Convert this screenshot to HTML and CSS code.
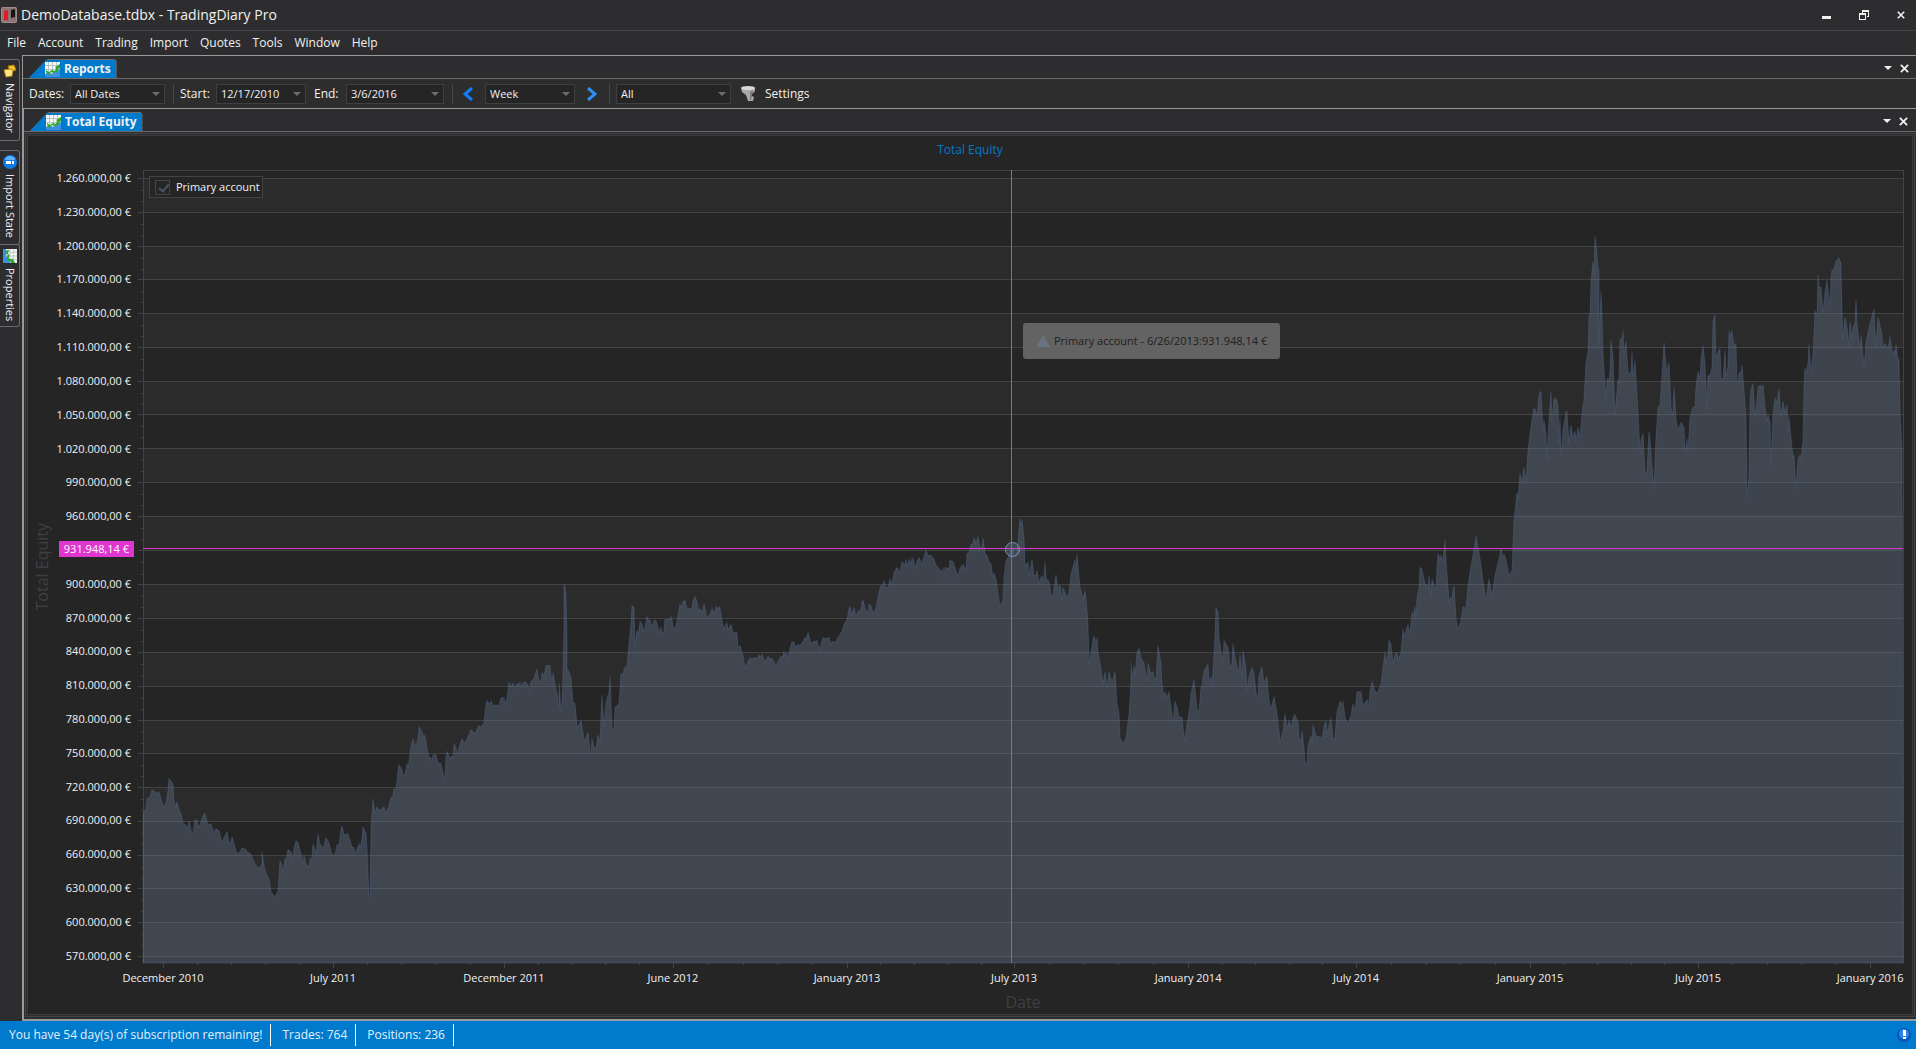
FILE: index.html
```html
<!DOCTYPE html>
<html lang="en">
<head>
    <meta charset="UTF-8">
    <meta name="viewport" content="width=device-width, initial-scale=1.0">
    <title>DemoDatabase.tdbx - TradingDiary Pro</title>
    <link rel="stylesheet" href="styles.css">
</head>
<body>
    <!-- shared icons -->
    <svg class="sprite" aria-hidden="true">
        <symbol id="icon-chart" viewBox="0 0 15 15">
            <path fill="#f4f7f4" d="M0 0h15v15H0z"/>
            <path stroke="#b9c4c9" d="M3.5 0v15M7.5 0v15M11.5 0v15M0 3.5h15M0 7.5h15"/>
            <path fill="#3d8fe0" d="M0 12l4-2 3 2 4-3 4-2v8H0z"/>
            <path fill="#2fa92c" d="M1 8l3 2 3-2 3 1 1-3-1-1 5-3v5l-1-1-2 4-3 1-3-1-3 3-2-3z"/>
        </symbol>
        <symbol id="icon-close" viewBox="0 0 10 10">
            <path stroke="#f1f1f1" stroke-width="2" d="M1 1l8 8M9 1L1 9"/>
        </symbol>
        <symbol id="icon-down" viewBox="0 0 8 4">
            <path fill="#f1f1f1" d="M0 0h8L4 4z"/>
        </symbol>
    </svg>

    <header class="titlebar">
        <svg class="app-icon" viewBox="0 0 16 16">
            <rect width="16" height="16" rx="2" fill="#a08a8a"/>
            <rect x="1" y="1" width="14" height="14" fill="#8c7474"/>
            <path fill="#e01b24" d="M3 4l4-1v10H3z"/>
            <path fill="#151515" d="M10 3l4-1v8l-4 1z"/>
        </svg>
        <h1>DemoDatabase.tdbx - TradingDiary Pro</h1>
        <div class="window-buttons">
            <button type="button" aria-label="Minimize"><svg width="9" height="10" viewBox="0 0 9 10"><path fill="#f1f1f1" d="M0 6h9v3H0z"/></svg></button>
            <button type="button" aria-label="Restore"><svg width="10" height="10" viewBox="0 0 10 10"><path fill="#f1f1f1" d="M3 0h7v7H8V6h1V2H4v1H3zM0 3h7v7H0zM1 5v4h5V5z" fill-rule="evenodd"/></svg></button>
            <button type="button" aria-label="Close"><svg width="8" height="8"><use href="#icon-close"/></svg></button>
        </div>
    </header>

    <nav class="menubar">
        <a href="#">File</a>
        <a href="#">Account</a>
        <a href="#">Trading</a>
        <a href="#">Import</a>
        <a href="#">Quotes</a>
        <a href="#">Tools</a>
        <a href="#">Window</a>
        <a href="#">Help</a>
    </nav>

    <div class="workspace">
        <aside class="sidebar">
            <button type="button" class="side-tab navigator">
                <svg viewBox="0 0 14 14"><path fill="#f2c42e" stroke="#a87708" d="M5 2l6-1 2 5-6 2z"/><path fill="#ffe684" stroke="#b98a12" d="M1 6l6-1 3 1-1 6-6 1z"/></svg>
                <span>Navigator</span>
            </button>
            <button type="button" class="side-tab">
                <svg viewBox="0 0 14 14"><circle cx="7" cy="7" r="7" fill="#0f7ae8"/><path fill="#62b1ff" d="M2 5a5 4 0 0 1 10 0z"/><path fill="#fff" d="M3 6h5v3H3zM9 6h2v3H9z"/></svg>
                <span>Import State</span>
            </button>
            <button type="button" class="side-tab">
                <svg class="turned" viewBox="0 0 15 15"><use href="#icon-chart"/></svg>
                <span>Properties</span>
            </button>
        </aside>

        <main class="dock">
            <div class="tabstrip">
                <div class="tab"><div class="tab-face"><svg><use href="#icon-chart"/></svg>Reports</div></div>
                <div class="pane-buttons">
                    <button type="button" aria-label="Pane menu"><svg width="8" height="4"><use href="#icon-down"/></svg></button>
                    <button type="button" aria-label="Close pane"><svg width="9" height="9"><use href="#icon-close"/></svg></button>
                </div>
            </div>

            <form class="toolbar">
                <label for="dates">Dates:</label>
                <span class="combo dates"><select id="dates"><option>All Dates</option></select></span>
                <i class="separator"></i>
                <label for="start">Start:</label>
                <span class="combo start"><select id="start"><option>12/17/2010</option></select></span>
                <label for="end">End:</label>
                <span class="combo end"><select id="end"><option>3/6/2016</option></select></span>
                <i class="separator"></i>
                <button type="button" class="step" aria-label="Previous"><svg width="10" height="14" viewBox="0 0 10 14"><path fill="none" stroke="#0d7ef5" stroke-width="3" d="M9 1L2 7l7 6"/></svg></button>
                <span class="combo period"><select id="period" aria-label="Period"><option>Week</option></select></span>
                <button type="button" class="step" aria-label="Next"><svg width="10" height="14" viewBox="0 0 10 14"><path fill="none" stroke="#2b90fb" stroke-width="3" d="M1 1l7 6-7 6"/></svg></button>
                <i class="separator"></i>
                <span class="combo filter"><select id="filter" aria-label="Filter"><option>All</option></select></span>
                <button type="button" class="settings">
                    <svg width="15" height="15" viewBox="0 0 15 15"><path fill="#a9a9a9" d="M0 2h14v3l-3 3v2l2 1-1 4H7L5 9 1 6z"/><ellipse cx="7" cy="2" rx="7" ry="2" fill="#d8d8d8"/><path fill="#7a7a7a" d="M9 6l3-2-2 10H9z"/></svg>
                    Settings
                </button>
            </form>

            <section class="document">
                <div class="tabstrip">
                    <div class="tab"><div class="tab-face"><svg><use href="#icon-chart"/></svg>Total Equity</div></div>
                    <div class="pane-buttons">
                        <button type="button" aria-label="Pane menu"><svg width="8" height="4"><use href="#icon-down"/></svg></button>
                        <button type="button" aria-label="Close pane"><svg width="9" height="9"><use href="#icon-close"/></svg></button>
                    </div>
                </div>

                <div class="chart">
                    <h2>Total Equity</h2>
                    <div class="y-title"><span>Total Equity</span></div>
                    <div class="y-axis" id="yAxis"></div>
                    <div class="plot">
                        <svg class="plot-area" viewBox="143 170 1760 792" preserveAspectRatio="none">
                            <g id="grid"></g>
                            <path id="series" class="series"/>
                            <path id="ticks" class="ticks"/>
                            <path class="crosshair" d="M1011.5 170V962M143 548.5H1903"/>
                        </svg>
                        <label class="legend"><input type="checkbox" checked>Primary account</label>
                        <i class="marker"></i>
                        <div class="tooltip"><i></i>Primary account - 6/26/2013:931.948,14 €</div>
                        <div class="value-tag">931.948,14 €</div>
                    </div>
                    <div class="x-axis" id="xAxis"></div>
                    <div class="x-title">Date</div>
                </div>
            </section>
        </main>
    </div>

    <footer class="statusbar">
        <span>You have 54 day(s) of subscription remaining!</span>
        <span>Trades: 764</span>
        <span>Positions: 236</span>
        <svg class="alert" viewBox="0 0 14 14"><circle cx="7" cy="7" r="7" fill="#0b55b8"/><circle cx="7" cy="6" r="5" fill="#2d86e6"/><path fill="#fff" d="M6 2h3v6H6zM6 9h3v2H6z"/></svg>
    </footer>

    <script src="chart.js"></script>
</body>
</html>
```
FILE: styles.css
```css
* {
    box-sizing: border-box;
}
body {
    margin: 0;
    height: 100vh;
    display: flex;
    flex-direction: column;
    overflow: hidden;
    background: #2d2d30;
    color: #f1f1f1;
    font-family: "Open Sans", "Noto Sans", sans-serif;
    font-size: 12px;
    line-height: 16px;
}
button {
    border: none;
    padding: 0;
    background: none;
    color: inherit;
    font: inherit;
}
svg {
    display: block;
}
.sprite {
    position: absolute;
    width: 0;
    height: 0;
}

/* title and menu */
.titlebar {
    display: flex;
    align-items: center;
    height: 31px;
    flex: none;
    padding: 0 11px 0 1px;
    border-bottom: 1px solid #434346;
}
.app-icon {
    width: 16px;
    height: 16px;
}
.titlebar h1 {
    margin: 0 0 0 4px;
    flex: 1;
    font-size: 14px;
    font-weight: normal;
    line-height: 20px;
}
.window-buttons {
    display: flex;
    align-items: center;
    gap: 28px;
}
.menubar {
    display: flex;
    align-items: center;
    gap: 12px;
    height: 24px;
    flex: none;
    padding-left: 7px;
}
.menubar a {
    color: inherit;
    text-decoration: none;
}

/* left strip */
.workspace {
    display: flex;
    flex: 1;
    min-height: 0;
}
.sidebar {
    width: 22px;
    flex: none;
    padding-top: 4px;
    font-size: 11px;
}
.side-tab {
    display: flex;
    flex-direction: column;
    align-items: center;
    gap: 5px;
    width: 20px;
    height: 83px;
    padding-top: 4px;
    border: 1px solid #6b6b6e;
    border-left: none;
    border-radius: 0 3px 3px 0;
}
.side-tab.navigator {
    height: 82px;
    margin-bottom: 9px;
}
.side-tab.navigator + .side-tab {
    height: 95px;
    margin-bottom: -1px;
}
.side-tab svg {
    width: 14px;
    height: 14px;
    flex: none;
}
.side-tab .turned {
    transform: rotate(90deg);
}
.side-tab span {
    writing-mode: vertical-rl;
    white-space: nowrap;
}

/* docked panes */
.dock {
    display: flex;
    flex-direction: column;
    flex: 1;
    min-width: 0;
    border-top: 1px solid #999;
    border-left: 1px solid #999;
}
.tabstrip {
    display: flex;
    align-items: flex-end;
    justify-content: space-between;
    height: 23px;
    flex: none;
    padding: 0 7px 0 6px;
    border-bottom: 1px solid #6b6b6b;
}
.document .tabstrip {
    padding-right: 8px;
}
.tab {
    padding: 1px 1px 0 0;
    background: #6b6b6b;
    clip-path: polygon(0 100%, 17px 1px, 19px 0, calc(100% - 2px) 0, 100% 2px, 100% 100%);
}
.tab-face {
    display: flex;
    align-items: center;
    gap: 4px;
    height: 18px;
    padding: 0 5px 0 16px;
    background: #007acc;
    font-weight: bold;
}
.tab-face svg {
    width: 15px;
    height: 15px;
}
.pane-buttons {
    display: flex;
    align-items: center;
    gap: 8px;
    height: 20px;
}
.toolbar {
    display: flex;
    align-items: center;
    height: 29px;
    flex: none;
    padding-left: 6px;
    background: #2d2d2d;
}
.combo {
    position: relative;
    flex: none;
    height: 20px;
    margin-right: 8px;
}
.combo::after {
    content: "";
    position: absolute;
    right: 5px;
    top: 8px;
    border: 4px solid transparent;
    border-top-color: #6d6d6d;
    border-bottom: none;
    pointer-events: none;
}
.combo select {
    width: 100%;
    height: 20px;
    padding: 0 4px;
    appearance: none;
    border: 1px solid #3f3f42;
    border-radius: 0;
    background: #252526;
    color: inherit;
    font: inherit;
    font-size: 11px;
    line-height: 18px;
}
.toolbar label {
    width: 36px;
    flex: none;
    white-space: nowrap;
}
.toolbar label[for="dates"] {
    width: 41px;
}
.toolbar label[for="end"] {
    width: 32px;
}
.dates {
    width: 95px;
}
.start,
.period {
    width: 90px;
}
.end {
    width: 98px;
}
.filter {
    width: 115px;
}
.separator {
    width: 1px;
    height: 20px;
    margin-right: 6px;
    background: #46464a;
}
.step {
    margin: 0 12px 0 4px;
}
.combo + .step {
    margin-right: 12px;
}
.settings {
    display: flex;
    align-items: center;
    gap: 9px;
    margin-left: 2px;
}
.document {
    display: flex;
    flex-direction: column;
    flex: 1;
    min-height: 0;
    border: solid #999;
    border-width: 1px 0 2px 1px;
}

/* chart */
.chart {
    display: grid;
    grid-template: 36px 1fr 29px 24px / 26px 91px 1fr;
    flex: 1;
    min-height: 0;
    margin: 1px 1px 2px;
    padding: 0 11px 0 0;
    border: 1px solid #434346;
    background: #252526;
    box-shadow: inset 0 0 0 1px #2d2d30, inset 0 0 0 2px #3a3a3d;
}
.chart h2 {
    grid-column: 1 / -1;
    margin: 0;
    padding: 8px 0 0 11px;
    color: #007acc;
    font-size: 12px;
    font-weight: normal;
    text-align: center;
}
.y-title,
.x-title {
    color: #3f3f42;
    font-size: 16px;
    line-height: 20px;
}
.y-title {
    display: flex;
    align-items: center;
    justify-content: flex-end;
}
.y-title span {
    writing-mode: vertical-rl;
    transform: rotate(180deg);
}
.y-axis {
    display: flex;
    flex-direction: column;
    justify-content: space-between;
    padding: 1px 12px 0 0;
    text-align: right;
    font-size: 11px;
    line-height: 14px;
    white-space: nowrap;
}
.plot {
    position: relative;
    min-width: 0;
    min-height: 0;
}
.plot-area {
    position: absolute;
    width: 100%;
    height: 100%;
    overflow: visible;
}
.band {
    fill: #2b2b2b;
}
.line,
.ticks {
    fill: none;
    stroke: #434343;
    shape-rendering: crispEdges;
}
.series {
    fill: rgba(99, 114, 139, 0.4);
    stroke: rgba(90, 122, 165, 0.3);
}
.crosshair {
    fill: none;
    stroke: #e036d0;
    shape-rendering: crispEdges;
}
.legend {
    position: absolute;
    left: 6px;
    top: 6px;
    display: flex;
    align-items: center;
    gap: 6px;
    height: 22px;
    padding: 0 2px 0 5px;
    border: 1px solid #434343;
    background: #252526;
    font-size: 11px;
}
.legend input {
    width: 15px;
    height: 15px;
    margin: 0;
    appearance: none;
    border: 1px solid #3c4654;
}
.legend input:checked::after {
    content: "";
    display: block;
    width: 4px;
    height: 8px;
    margin: 1px 0 0 5px;
    border: solid #4a5566;
    border-width: 0 2px 2px 0;
    transform: rotate(40deg);
}
.marker {
    position: absolute;
    left: 49.35%;
    top: 47.8%;
    width: 15px;
    height: 15px;
    margin: -7px 0 0 -7px;
    border: 1px solid #7b93b8;
    border-radius: 50%;
    background: rgba(110, 135, 170, 0.3);
}
.tooltip {
    position: absolute;
    left: 50%;
    top: 19.3%;
    display: flex;
    align-items: center;
    gap: 4px;
    height: 36px;
    padding: 0 13px;
    border-radius: 3px;
    background: #636363;
    color: #202020;
    font-size: 11px;
    white-space: nowrap;
}
.tooltip i {
    border: 7px solid transparent;
    border-top: none;
    border-bottom: 12px solid #69727f;
}
.value-tag {
    position: absolute;
    right: calc(100% + 9px);
    top: 47.8%;
    height: 16px;
    margin-top: -8px;
    padding: 0 5px;
    background: #e036d0;
    color: #fff;
    font-size: 11px;
    white-space: nowrap;
}
.x-axis {
    position: relative;
    grid-column: 3;
    font-size: 11px;
}
.x-axis span {
    position: absolute;
    top: 7px;
    transform: translateX(-50%);
    white-space: nowrap;
}
.x-title {
    grid-column: 3;
    text-align: center;
}

/* status */
.statusbar {
    display: flex;
    align-items: center;
    height: 28px;
    flex: none;
    padding: 0 5px 0 0;
    background: #007acc;
    color: #e4f1fa;
}
.statusbar span {
    height: 22px;
    padding: 0 8px 0 11px;
    border-right: 1px solid #fff;
    line-height: 22px;
}
.statusbar span:first-child {
    padding-left: 9px;
}
.alert {
    width: 14px;
    height: 14px;
    margin-left: auto;
}
```
FILE: chart.js
```js
// plot rectangle, same units as the viewBox
const LEFT = 143, TOP = 170, RIGHT = 1903, BOTTOM = 962;
const FIRST_LINE = 178, LAST_LINE = 955;
const MAX_VALUE = 1260, MIN_VALUE = 570, STEP = 30;

const months = [
    ['December 2010', 163], ['July 2011', 333], ['December 2011', 504],
    ['June 2012', 673], ['January 2013', 847], ['July 2013', 1014],
    ['January 2014', 1188], ['July 2014', 1356], ['January 2015', 1530],
    ['July 2015', 1698], ['January 2016', 1870]
];

const equity = `143,812 146,808 147,798 150,796 152,789 155,791 157,793 159,791 162,802 164,806 166,802 168,790 169,778 173,783 174,800 176,806 177,801 179,809 181,813 183,822 188,827 189,820 192,833 193,832 195,819 197,819 199,827 202,818 204,813 205,813 208,824 211,823 214,832 216,828 219,830 222,842 224,837 227,831 229,842 231,842 232,836 237,853 240,851 242,847 245,848 248,852 250,852 255,863 257,866 260,867 262,862 262,851 264,865 267,875 269,877 271,891 275,896 278,890 280,860 282,865 283,873 285,857 286,861 288,849 291,851 293,860 294,847 296,840 298,842 301,853 303,863 304,854 306,863 309,866 310,858 312,857 313,843 316,853 318,833 320,843 323,848 326,837 329,842 332,854 335,854 337,844 339,844 341,829 342,825 344,834 348,833 352,846 354,847 355,854 357,848 359,843 360,848 361,842 362,839 363,826 366,833 367,847 368,873 369,897 370,893 371,827 372,813 373,798 375,812 377,806 380,810 384,806 386,812 388,808 391,797 393,795 394,788 396,789 398,770 399,764 402,769 403,775 405,773 407,763 408,766 409,761 411,745 413,738 415,747 416,742 417,745 419,726 422,731 424,737 425,734 427,748 429,756 431,757 432,761 433,754 436,754 438,762 441,763 444,777 445,775 446,757 447,751 450,758 452,755 453,759 454,743 456,747 457,755 459,747 462,738 465,743 468,736 471,729 475,733 479,725 481,727 484,722 486,703 487,700 490,704 491,700 493,705 496,704 499,705 501,697 504,697 506,704 507,697 509,682 512,686 513,682 515,690 516,684 520,682 522,686 523,682 525,681 528,684 529,692 531,681 534,678 537,668 539,680 541,681 542,672 544,675 546,665 550,665 552,684 553,672 556,689 557,692 559,708 559,682 561,711 562,703 563,670 564,627 564,583 566,593 567,635 567,672 568,669 571,677 573,702 575,703 576,713 577,728 581,720 584,738 585,741 588,731 590,750 591,753 592,738 594,747 596,747 598,734 600,742 601,713 602,694 604,726 606,701 609,692 610,676 612,727 614,728 615,707 619,703 621,673 623,675 624,668 627,665 629,643 631,623 632,605 634,607 635,644 637,630 638,635 640,621 642,623 643,630 645,627 647,616 649,621 650,618 651,627 654,620 656,620 658,627 660,633 661,626 662,633 664,631 665,619 670,619 671,616 672,618 673,628 676,626 679,609 680,604 681,607 683,601 685,600 687,608 692,608 693,600 695,596 697,601 699,612 700,608 702,613 704,603 707,617 710,614 712,608 714,613 716,606 718,609 719,606 720,608 722,620 724,628 727,622 728,629 731,624 733,632 737,632 738,647 740,645 743,655 745,667 749,659 749,663 750,657 752,659 754,657 757,658 759,654 760,657 762,654 765,661 768,656 771,659 772,658 776,665 778,661 781,656 783,656 784,650 784,655 786,652 788,657 790,648 792,641 794,642 796,647 798,644 800,645 803,641 805,637 806,639 808,632 811,643 814,641 817,640 820,650 821,643 823,637 825,638 829,637 831,644 832,641 835,642 838,637 842,631 844,624 847,619 849,608 850,606 852,614 854,607 856,616 858,611 861,609 862,601 863,600 866,611 868,611 869,604 871,605 873,613 876,608 878,596 881,584 882,588 884,580 886,588 888,586 890,579 892,583 894,572 897,567 900,572 902,561 905,565 906,559 907,567 909,559 911,564 912,557 914,561 915,568 917,561 919,557 922,564 924,556 926,550 928,555 931,555 934,559 936,565 939,568 941,572 943,568 944,577 945,567 949,568 950,560 953,561 955,567 957,573 958,576 960,568 963,564 966,569 967,553 969,552 971,544 973,543 974,537 976,543 978,536 980,547 982,547 983,537 985,553 987,555 989,561 991,563 993,578 994,573 996,578 998,593 1000,606 1003,600 1004,577 1006,560 1008,557 1011,549 1013,548 1014,556 1017,552 1019,530 1020,518 1021,526 1022,519 1024,537 1025,565 1028,562 1029,575 1032,559 1034,575 1036,575 1037,570 1039,582 1042,575 1044,580 1045,561 1046,578 1049,581 1051,595 1053,595 1055,580 1056,574 1058,590 1060,584 1062,600 1063,587 1067,597 1069,593 1071,574 1075,559 1076,571 1077,553 1080,587 1083,598 1085,590 1086,597 1088,623 1089,665 1091,652 1094,635 1096,643 1097,637 1098,652 1101,668 1103,683 1105,671 1107,687 1109,671 1111,679 1113,679 1115,671 1117,703 1119,713 1120,737 1123,743 1126,738 1129,713 1131,682 1131,662 1132,678 1134,665 1135,675 1137,652 1139,648 1141,658 1144,662 1147,681 1148,663 1151,673 1153,671 1154,677 1156,679 1158,645 1161,663 1162,683 1164,697 1165,691 1167,697 1169,691 1171,707 1173,722 1175,701 1177,706 1179,717 1182,716 1183,727 1185,741 1187,723 1189,712 1191,693 1194,679 1197,708 1199,711 1201,687 1202,685 1204,670 1208,664 1209,682 1211,676 1212,687 1214,653 1215,637 1216,607 1218,612 1219,637 1222,657 1223,659 1224,640 1228,647 1230,667 1232,663 1233,643 1235,657 1239,673 1240,654 1242,677 1243,650 1246,668 1247,690 1249,676 1252,667 1254,673 1256,692 1258,699 1259,675 1262,666 1264,683 1267,675 1269,700 1271,708 1274,696 1277,713 1279,730 1280,742 1283,730 1285,713 1287,728 1289,720 1292,727 1293,717 1295,714 1298,722 1299,737 1301,740 1302,730 1304,747 1305,763 1307,762 1308,745 1311,735 1312,742 1313,724 1316,735 1322,737 1324,726 1326,720 1327,733 1330,720 1331,718 1333,738 1335,737 1337,711 1340,701 1343,704 1343,700 1345,717 1348,723 1351,715 1353,703 1355,711 1357,691 1361,691 1363,705 1367,699 1369,705 1370,690 1372,681 1375,690 1377,693 1381,683 1383,667 1385,651 1386,663 1388,652 1389,639 1391,644 1393,663 1395,654 1397,652 1398,659 1401,652 1403,628 1404,636 1408,624 1410,633 1412,612 1414,614 1415,605 1416,619 1417,597 1419,587 1420,567 1422,569 1425,583 1427,585 1428,589 1429,575 1431,595 1432,579 1436,590 1437,567 1438,553 1440,559 1441,555 1443,560 1445,539 1446,560 1449,600 1452,596 1454,585 1456,618 1458,629 1461,620 1463,606 1466,608 1468,585 1472,560 1475,543 1476,535 1477,541 1480,558 1483,580 1486,600 1489,578 1492,596 1495,575 1500,554 1501,547 1503,558 1504,554 1506,559 1509,575 1512,570 1514,520 1517,492 1518,499 1520,473 1522,482 1524,467 1526,482 1528,450 1531,426 1534,408 1535,409 1537,416 1539,394 1541,391 1543,431 1544,420 1546,433 1547,459 1549,420 1551,391 1552,421 1554,397 1555,403 1556,398 1558,404 1559,443 1560,417 1561,457 1563,430 1566,412 1567,411 1569,443 1571,425 1573,438 1575,431 1576,441 1578,427 1580,437 1582,413 1584,400 1586,362 1588,352 1589,314 1590,317 1591,282 1593,261 1594,277 1595,236 1596,244 1598,267 1599,270 1599,343 1600,317 1601,291 1602,313 1603,353 1605,383 1606,402 1607,378 1609,380 1610,370 1611,340 1613,357 1615,415 1617,392 1618,379 1619,383 1620,339 1622,338 1623,330 1624,354 1626,341 1628,372 1630,374 1631,372 1632,350 1633,377 1635,360 1636,377 1638,413 1640,451 1641,440 1643,433 1645,473 1647,471 1649,431 1650,438 1652,467 1654,488 1656,437 1658,407 1660,405 1662,375 1664,342 1665,353 1667,374 1668,367 1669,362 1671,408 1673,415 1674,386 1676,419 1678,430 1679,427 1681,422 1684,427 1685,449 1686,447 1687,438 1688,452 1690,417 1693,407 1695,407 1696,386 1698,371 1700,379 1701,360 1703,345 1705,363 1707,409 1708,374 1709,378 1712,368 1713,321 1715,314 1716,357 1718,352 1720,348 1721,378 1723,379 1725,350 1726,376 1728,366 1729,330 1730,337 1732,330 1734,346 1736,343 1737,382 1738,383 1739,373 1741,372 1742,365 1744,390 1746,417 1747,498 1749,477 1750,403 1751,389 1753,383 1755,417 1757,400 1758,386 1761,385 1762,389 1763,384 1765,407 1767,422 1768,414 1770,422 1771,466 1773,413 1775,398 1777,402 1779,388 1781,417 1783,401 1785,413 1787,404 1788,431 1789,416 1791,438 1793,457 1794,455 1796,489 1798,459 1800,455 1801,460 1803,440 1804,388 1805,367 1806,374 1808,363 1809,344 1811,372 1813,353 1815,310 1817,317 1818,274 1819,287 1821,287 1823,312 1825,292 1827,280 1830,306 1831,278 1832,270 1834,269 1836,261 1839,258 1841,263 1841,272 1842,308 1843,339 1845,317 1847,327 1849,347 1850,321 1852,338 1853,327 1855,323 1856,299 1857,323 1860,350 1861,335 1863,353 1864,368 1866,342 1869,328 1872,316 1874,309 1875,330 1876,347 1878,317 1880,325 1882,335 1883,349 1885,343 1887,348 1889,344 1890,336 1892,350 1893,353 1895,349 1895,357 1896,344 1897,352 1898,363 1899,357 1900,413 1901,427 1902,449`;

document.getElementById('series').setAttribute('d', `M${LEFT} ${BOTTOM}L${equity} ${RIGHT},${BOTTOM}Z`);

function formatValue(thousands) {
    const text = String(thousands);
    return (text.length > 3 ? '1.' + text.slice(1) : text) + '.000,00 €';
}

// horizontal lines, bands and the value axis
const rows = (MAX_VALUE - MIN_VALUE) / STEP;
const pitch = (LAST_LINE - FIRST_LINE) / rows;
let bands = '';
let lines = `M${LEFT + 0.5} ${BOTTOM}V${TOP + 0.5}H${RIGHT + 0.5}V${BOTTOM}`;
let ticks = '';
let labels = '';

for (let i = 0; i <= rows; i++) {
    const y = Math.round(FIRST_LINE + i * pitch) + 0.5;
    const value = MAX_VALUE - i * STEP;
    if (i % 2 === 0 && i < rows) {
        bands += `<rect class="band" x="${LEFT}" y="${y}" width="${RIGHT - LEFT}" height="${pitch}"/>`;
    }
    lines += `M${LEFT} ${y}H${RIGHT}`;
    ticks += `M${LEFT - 5} ${y}h5`;
    if (i < rows) {
        ticks += `M${LEFT - 2} ${y + 12}h2M${LEFT - 2} ${y + 23}h2`;
    }
    // the crosshair tag covers the 930 label
    labels += `<span>${value === 930 ? '&nbsp;' : formatValue(value)}</span>`;
}

// date axis, four short ticks between two months
let dates = '';
months.forEach(([name, x], i) => {
    ticks += `M${x + 0.5} ${BOTTOM}v5`;
    const next = months[i + 1];
    for (let k = 1; next && k < 5; k++) {
        ticks += `M${Math.round(x + (next[1] - x) * k / 5) + 0.5} ${BOTTOM}v2`;
    }
    dates += `<span style="left: ${((x - LEFT) / (RIGHT - LEFT) * 100).toFixed(2)}%">${name}</span>`;
});

document.getElementById('grid').innerHTML = `${bands}<path class="line" d="${lines}"/>`;
document.getElementById('ticks').setAttribute('d', ticks);
document.getElementById('yAxis').innerHTML = labels;
document.getElementById('xAxis').innerHTML = dates;
```
